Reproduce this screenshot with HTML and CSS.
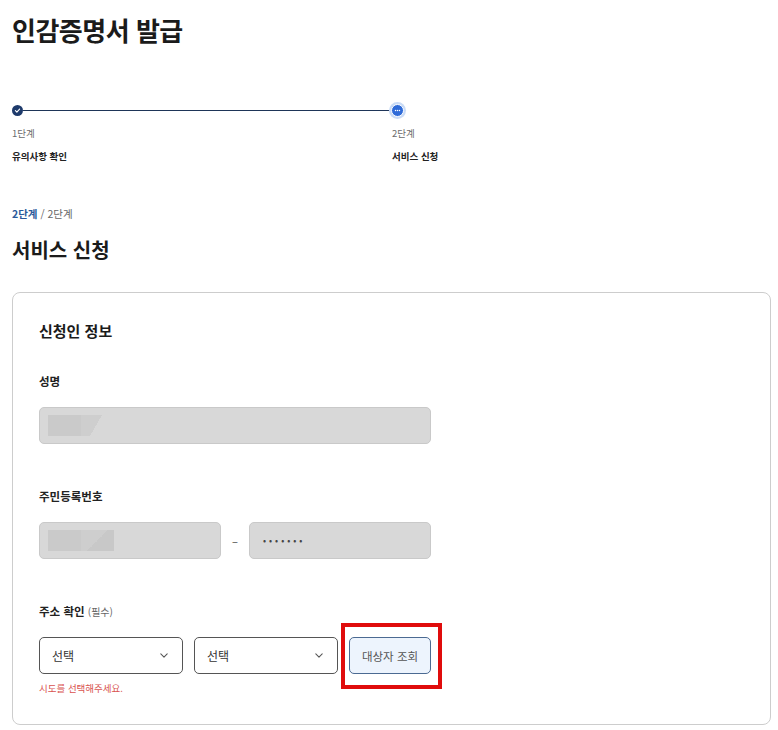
FILE: index.html
```html
<!DOCTYPE html>
<html lang="ko">
<head>
<meta charset="utf-8">
<title>인감증명서 발급</title>
<link rel="stylesheet" href="styles.css">
</head>
<body>
<main class="page">
  <h1 class="title">인감증명서 발급</h1>

  <ol class="stepper">
    <li class="step done">
      <div class="track">
        <span class="dot dot-done">
          <svg viewBox="0 0 10 10" width="7" height="7"><path d="M2 5.2 L4.1 7.2 L8 2.9" fill="none" stroke="#fff" stroke-width="1.6" stroke-linecap="round" stroke-linejoin="round"/></svg>
        </span>
        <span class="line"></span>
      </div>
      <div class="step-num">1단계</div>
      <div class="step-name">유의사항 확인</div>
    </li>
    <li class="step current">
      <div class="track">
        <span class="dot dot-current">
          <svg viewBox="0 0 10 10" width="9" height="9"><circle cx="2.8" cy="5" r="0.8" fill="#fff"/><circle cx="5" cy="5" r="0.8" fill="#fff"/><circle cx="7.2" cy="5" r="0.8" fill="#fff"/></svg>
        </span>
      </div>
      <div class="step-num">2단계</div>
      <div class="step-name">서비스 신청</div>
    </li>
  </ol>

  <p class="crumb"><strong>2단계</strong> / 2단계</p>
  <h2 class="subtitle">서비스 신청</h2>

  <section class="card">
    <h3 class="card-title">신청인 정보</h3>

    <div class="field">
      <label class="label">성명</label>
      <div class="input input-full"><span class="mask"><span class="mask-a"></span><span class="mask-b"></span></span></div>
    </div>

    <div class="field">
      <label class="label">주민등록번호</label>
      <div class="row">
        <div class="input input-half"><span class="mask"><span class="mask-a"></span><span class="mask-b2"></span></span></div>
        <span class="dash">–</span>
        <div class="input input-half"><span class="pw">•••••••</span></div>
      </div>
    </div>

    <div class="field field-last">
      <label class="label">주소 확인 <span class="req">(필수)</span></label>
      <div class="row row-select">
        <div class="select">선택
          <svg class="chev" viewBox="0 0 10 6" width="8" height="5"><path d="M1 1 L5 5 L9 1" fill="none" stroke="#555" stroke-width="1.3" stroke-linecap="round" stroke-linejoin="round"/></svg>
        </div>
        <div class="select">선택
          <svg class="chev" viewBox="0 0 10 6" width="8" height="5"><path d="M1 1 L5 5 L9 1" fill="none" stroke="#555" stroke-width="1.3" stroke-linecap="round" stroke-linejoin="round"/></svg>
        </div>
        <div class="btn-wrap">
          <button class="btn">대상자 조회</button>
          <span class="highlight"></span>
        </div>
      </div>
      <p class="error">시도를 선택해주세요.</p>
    </div>
  </section>
</main>
</body>
</html>
```

FILE: styles.css
```css
* { box-sizing: border-box; }
html, body { margin: 0; padding: 0; background: #fff; }
body {
  font-family: "Noto Sans CJK KR", "Noto Sans", sans-serif;
  color: #1d1d1d;
}
.page { padding: 0 7px 0 12px; }

.title {
  margin: 0;
  padding-top: 12px;
  font-size: 26px;
  line-height: 36px;
  font-weight: 700;
  letter-spacing: -0.5px;
  color: #1b1b1b;
}

.stepper {
  list-style: none;
  margin: 55px 0 0;
  padding: 0;
  display: grid;
  grid-template-columns: 380px 100px;
}
.track { display: flex; align-items: center; height: 14px; }
.line { flex: 1; height: 1px; background: #1e3558; }
.dot {
  display: flex; align-items: center; justify-content: center;
  border-radius: 50%;
  flex: none;
}
.dot-done { width: 11px; height: 11px; background: #1e3a6b; }
.dot-current {
  width: 13px; height: 13px;
  margin-left: -1px;
  background: #2f6bd8;
  box-shadow: 0 0 0 2px #c9dbf6;
  border: 1px solid #fff;
}
.step-num {
  margin-top: 9px;
  font-size: 9.5px;
  line-height: 14px;
  color: #6b6b6b;
}
.step-name {
  margin-top: 9px;
  font-size: 9.5px;
  line-height: 14px;
  font-weight: 700;
  color: #222;
}

.crumb {
  margin: 43px 0 0;
  font-size: 10.5px;
  line-height: 16px;
  color: #666;
}
.crumb strong { color: #2c5a9a; font-weight: 700; }
.subtitle {
  margin: 14px 0 0;
  font-size: 20px;
  line-height: 28px;
  font-weight: 700;
  color: #1b1b1b;
}

.card {
  margin-top: 28px;
  border: 1px solid #cdcdcd;
  border-radius: 8px;
  padding: 26px 26px 34px;
  height: 433px;
}
.card-title {
  margin: 0;
  font-size: 15px;
  line-height: 24px;
  font-weight: 700;
  color: #1b1b1b;
}
.field { margin-top: 30px; }
.field + .field { margin-top: 44px; }
.label {
  display: block;
  font-size: 11.5px;
  line-height: 16px;
  font-weight: 700;
  color: #222;
}
.req { font-weight: 400; font-size: 10px; color: #666; }

.input {
  margin-top: 18px;
  height: 37px;
  background: #d8d8d8;
  border: 1px solid #c9c9c9;
  border-radius: 5px;
  display: flex;
  align-items: center;
  padding-left: 8px;
}
.row .input { margin-top: 0; }
.input-full { width: 392px; }
.input-half { width: 182px; }
.mask { display: flex; height: 21px; }
.mask-a { width: 33px; background: #cacaca; }
.mask-b { width: 30px; background: linear-gradient(120deg, #cecece 50%, #d8d8d8 50%); }
.mask-b2 { width: 33px; background: linear-gradient(135deg, #cecece 50%, #c8c8c8 50%); }
.pw { padding-left: 5px; font-size: 9px; letter-spacing: 3px; color: #444; }

.row { display: flex; align-items: center; margin-top: 18px; }
.dash { width: 28px; text-align: center; font-size: 11px; color: #444; }

.row-select { gap: 11px; margin-top: 17px; }
.select {
  width: 144px;
  height: 37px;
  border: 1px solid #555;
  border-radius: 5px;
  display: flex;
  align-items: center;
  justify-content: space-between;
  padding: 0 14px 0 12px;
  font-size: 12px;
  color: #333;
}
.btn-wrap { position: relative; }
.btn {
  width: 82px;
  height: 37px;
  border: 1px solid #4b6a92;
  border-radius: 5px;
  background: #edf4fd;
  font-family: inherit;
  font-size: 11.5px;
  color: #555;
  padding: 0;
}
.highlight {
  position: absolute;
  left: -8px; top: -14px;
  width: 101px; height: 66px;
  border: 4px solid #e00c0c;
  pointer-events: none;
}
.error {
  margin: 7px 0 0;
  font-size: 9.5px;
  line-height: 14px;
  color: #d9534f;
}
```
